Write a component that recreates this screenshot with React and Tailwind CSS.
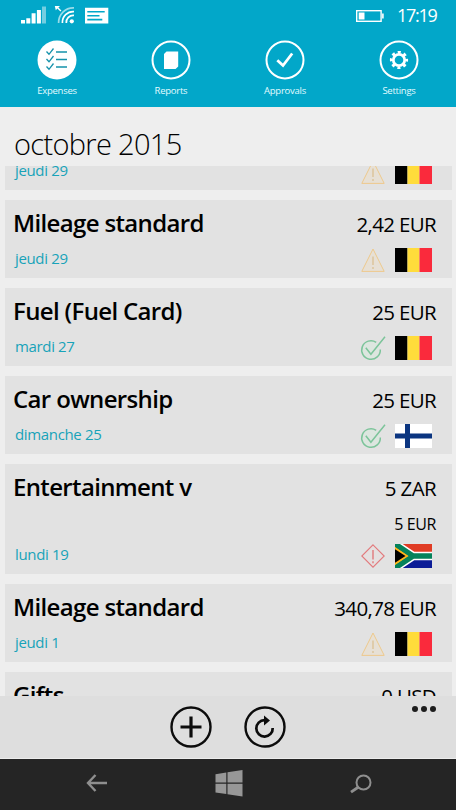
import React from "react";
import clsx from "clsx";

//the first card only shows its bottom line
const expenses = [
  { title: "", amount: "", date: "jeudi 29", status: "warning", flag: "be" },
  { title: "Mileage standard", amount: "2,42 EUR", date: "jeudi 29", status: "warning", flag: "be" },
  { title: "Fuel (Fuel Card)", amount: "25 EUR", date: "mardi 27", status: "ok", flag: "be" },
  { title: "Car ownership", amount: "25 EUR", date: "dimanche 25", status: "ok", flag: "fi" },
  { title: "Entertainment v", amount: "5 ZAR", converted: "5 EUR", date: "lundi 19", status: "error", flag: "za" },
  { title: "Mileage standard", amount: "340,78 EUR", date: "jeudi 1", status: "warning", flag: "be" },
  { title: "Gifts", amount: "0 USD" },
];

function StatusBar() {
  return (
    <div className="flex h-8 items-start justify-between pl-[20px] pr-[22px] text-white">
      <svg width="90" height="30" viewBox="20 0 90 30" fill="currentColor">
        {/* signal */}
        <path d="M21 20h4v3.500h-4zM26.300 18.300h4v5.200h-4zM31.600 13.200h4v10.300h-4zM36.900 10h4v13.500h-4z" />
        <path d="M42 6.500h4v17h-4z" opacity=".45" />
        {/* wifi */}
        <path d="M54.800 6h5.200l-1.600 1.600 3 3-1 1-3-3-1.600 1.600z" />
        <circle cx="71.800" cy="21.300" r="2.100" />
        <g fill="none" stroke="currentColor" strokeWidth="1.700">
          <path d="M66.300 23a7 7 0 0 1 7.700-7.600" />
          <path d="M62.400 23a10.800 10.800 0 0 1 11.600-11.400" />
          <path d="M58.600 23A14.700 14.700 0 0 1 74 7.800" opacity=".6" />
        </g>
        {/* message */}
        <path fillRule="evenodd" d="M85 7.800h23.300v15.700H85zM87.300 11v1.600h17.400V11zM87.300 14.900v1.600h12.200v-1.600zM87.300 18.800v1.600h15v-1.600z" />
      </svg>
      <div className="flex">
        <svg className="mt-[9px] mr-[12px]" width="30" height="14" viewBox="0 0 30 14">
          <rect x="1.700" y="1.700" width="24.400" height="10.600" fill="none" stroke="currentColor" strokeWidth="1.400" />
          <path d="M3.700 3.500h5.800v7H3.700zM27.100 4.500h1.600v5h-1.600z" fill="currentColor" />
        </svg>
        <span className="mt-[3px] h-6 w-[37px] whitespace-nowrap text-[18px] leading-6 tracking-[-1.300px]">17:19</span>
      </div>
    </div>
  );
}

function TabIcon({ name }) {
  return (
    <svg width="40" height="40" viewBox="0 0 40 40" fill="none" stroke="white">
      {name === "Expenses" ? (
        <>
          <circle cx="20" cy="20" r="19.500" fill="white" stroke="none" />
          <g stroke="#1592ab" strokeWidth="1.300">
            <path d="M19 12h11M19 19.500h11M19 27h11" />
            <path d="M9.500 11.500l2.500 2.800 4.500-5.800M9.500 19l2.500 2.800 4.500-5.800M9.500 26.500l2.500 2.800 4.500-5.800" />
          </g>
        </>
      ) : (
        <circle cx="20" cy="20" r="18.500" strokeWidth="2" />
      )}
      {name === "Reports" && (
        <path d="M15.500 11.500H27.200V26.500L24.600 29H13V14z" fill="white" stroke="none" />
      )}
      {name === "Approvals" && <path d="M12.300 20.300l5.700 5.200 9.200-12" strokeWidth="2.800" />}
      {name === "Settings" && (
        <>
          <circle cx="20" cy="20" r="5.700" strokeWidth="2.800" />
          <circle cx="20" cy="20" r="7.800" strokeWidth="2.600" strokeDasharray="3.060 3.066" strokeDashoffset="1.530" />
        </>
      )}
    </svg>
  );
}

function Tabs() {
  return (
    <div className="grid grid-cols-4 pt-[8px]">
      {["Expenses", "Reports", "Approvals", "Settings"].map((el) => (
        <div key={el} className="flex flex-col items-center">
          <TabIcon name={el} />
          <span className="mt-[3px] text-[9.500px] leading-4 tracking-[-0.250px] text-[#e3fbff]">{el}</span>
        </div>
      ))}
    </div>
  );
}

function Status({ type }) {
  if (type === "warning") {
    return (
      <svg width="24" height="24" viewBox="0 0 24 24" fill="none" stroke="#edc98c">
        <path d="M12 1L23.200 23.400H.800z" fill="#e7e0d5" />
        <path d="M12 8.500v8.500M12 19v2" stroke="#dcc398" strokeWidth="1.400" />
      </svg>
    );
  }
  if (type === "error") {
    return (
      <svg width="24" height="24" viewBox="0 0 24 24" fill="none" stroke="#e2797c" strokeWidth="1.100">
        <path d="M12 .800L23.200 12 12 23.200.800 12z" fill="#e5e0e0" />
        <path d="M12 6v9.500M12 17.300v2" strokeWidth="1.400" />
      </svg>
    );
  }
  return (
    <svg width="24" height="24" viewBox="0 0 24 24" className="overflow-visible" fill="none" stroke="#7cc49a" strokeWidth="1.500">
      <circle cx="10" cy="14" r="9" fill="#dce6df" stroke="none" />
      <path d="M15.200 6.300A9.300 9.300 0 1 0 19.300 13.500" />
      <path d="M4.800 11.800l5.100 6.400L24 .800" />
    </svg>
  );
}

function Flag({ country }) {
  return (
    <svg width="37" height="24" viewBox="0 0 37 24">
      {country === "be" && (
        <>
          <path d="M0 0h12.500v24H0z" fill="#000" />
          <path d="M12.500 0h12v24h-12z" fill="#ffdc3b" />
          <path d="M24.500 0H37v24H24.500z" fill="#fa2a3c" />
        </>
      )}
      {country === "fi" && (
        <>
          <path d="M0 0h37v24H0z" fill="#fff" />
          <path d="M10 0h5v9.500h22v5H15V24h-5v-9.500H0v-5h10z" fill="#0b3580" />
        </>
      )}
      {country === "za" && (
        <>
          <path d="M0 0h37v12H0z" fill="#e03c25" />
          <path d="M0 12h37v12H0z" fill="#0c1c97" />
          <path d="M0 0l18 12L0 24M17 12h20" fill="none" stroke="#fff" strokeWidth="8.500" />
          <path d="M0 0l18 12L0 24z" fill="#ffb51c" />
          <path d="M0 0l18 12L0 24M17 12h20" fill="none" stroke="#05825b" strokeWidth="5.500" />
          <path d="M0 3L13.500 12 0 21z" fill="#ffb51c" />
          <path d="M0 5.200L10.500 12 0 18.800z" fill="#000" />
        </>
      )}
    </svg>
  );
}

function ExpenseCard({ expense }) {
  return (
    <div
      className={clsx(
        "flex shrink-0 flex-col bg-[#e2e2e2]",
        expense.converted ? "h-[110px]" : "h-[78px]"
      )}
    >
      <div className="flex h-12 justify-between pl-[8px] pr-[16px]">
        <span className="mt-[7px] text-[24px] leading-8 font-semibold tracking-[-0.650px]">{expense.title}</span>
        <span className="mt-[8px] text-[20.500px] leading-8 tracking-[-0.650px]">{expense.amount}</span>
      </div>
      {expense.converted && (
        <div className="flex h-8 justify-end pr-[16px] text-[16px] leading-6 tracking-[-0.400px]">{expense.converted}</div>
      )}
      {expense.date && (
        <div className="flex h-6 justify-between pl-[10px] pr-[20px]">
          <span className="text-[15px] leading-[21px] tracking-[-0.350px] text-[#18a3b9]">{expense.date}</span>
          <div className="flex gap-[10px]">
            <Status type={expense.status} />
            <Flag country={expense.flag} />
          </div>
        </div>
      )}
    </div>
  );
}

function AppBar() {
  return (
    <div className="grid h-[63px] grid-cols-[1fr_auto_1fr] border-b border-[#ececec] bg-[#dedede]">
      <div />
      <div className="flex gap-[32px] pt-[10px]">
        <svg width="42" height="42" viewBox="0 0 42 42" fill="none" stroke="#0c0c0c">
          <circle cx="21" cy="21" r="19.500" strokeWidth="2.400" />
          <path d="M21 10.500v21M10.500 21h21" strokeWidth="3.200" />
        </svg>
        <svg width="42" height="42" viewBox="0 0 42 42" fill="none" stroke="#0c0c0c">
          <circle cx="21" cy="21" r="19.500" strokeWidth="2.400" />
          <path d="M22 14.200h-1.500a8.200 8.200 0 1 0 8.200 7.800" strokeWidth="2.700" />
          <path d="M20 9.500l6 5-6 5z" fill="#0c0c0c" stroke="none" />
        </svg>
      </div>
      <div className="flex justify-end gap-[3px] pt-[10px] pr-[20px]">
        <span className="size-[6px] rounded-full bg-[#1c1c1c]" />
        <span className="size-[6px] rounded-full bg-[#1c1c1c]" />
        <span className="size-[6px] rounded-full bg-[#1c1c1c]" />
      </div>
    </div>
  );
}

function NavBar() {
  return (
    <div className="flex h-[51px] items-start justify-between bg-[#252525] pt-[11px] pr-[83px] pl-[86px]">
      <svg className="mt-[3px]" width="22" height="20" viewBox="0 0 22 20" fill="none" stroke="#8f8f8f" strokeWidth="2.400">
        <path d="M21 10H2M9.500 2L2 10l7.500 8" />
      </svg>
      <svg className="ml-[1px]" width="28" height="27" viewBox="0 0 28 27" fill="#979797">
        <path d="M.500 4.200L11.300 2.500v10H.500zM12.500 2.300L27.500 0v12.500h-15zM.500 13.700h10.800v10.400L.500 22.500zM12.500 13.700h15v12.800l-15-2.200z" />
      </svg>
      <svg className="mt-[4px]" width="24" height="20" viewBox="0 0 24 20" fill="none" stroke="#8f8f8f">
        <circle cx="14.500" cy="8.500" r="7" strokeWidth="2" />
        <path d="M9.500 13l-7.500 5.200" strokeWidth="2.800" />
      </svg>
    </div>
  );
}

export function App() {
  return (
    <div className="flex h-[810px] w-[456px] flex-col overflow-hidden bg-[#eeeeee] font-['Open_Sans','Noto_Sans',sans-serif] text-black">
      <div className="h-[107px] shrink-0 bg-[#02a7c9]">
        <StatusBar />
        <Tabs />
      </div>
      <div className="h-[59px] shrink-0 pt-[17px] pl-[14px] text-[29px] leading-10 font-light tracking-[-0.680px]">octobre 2015</div>
      {/* list is scrolled, first and last cards are cut */}
      <div className="flex min-h-0 flex-1 flex-col overflow-hidden pr-[4px] pl-[5px]">
        <div className="-mt-[54px] flex flex-col gap-[10px]">
          {expenses.map((expense, i) => (
            <ExpenseCard key={i} expense={expense} />
          ))}
        </div>
      </div>
      <AppBar />
      <NavBar />
    </div>
  );
}
export default App;
